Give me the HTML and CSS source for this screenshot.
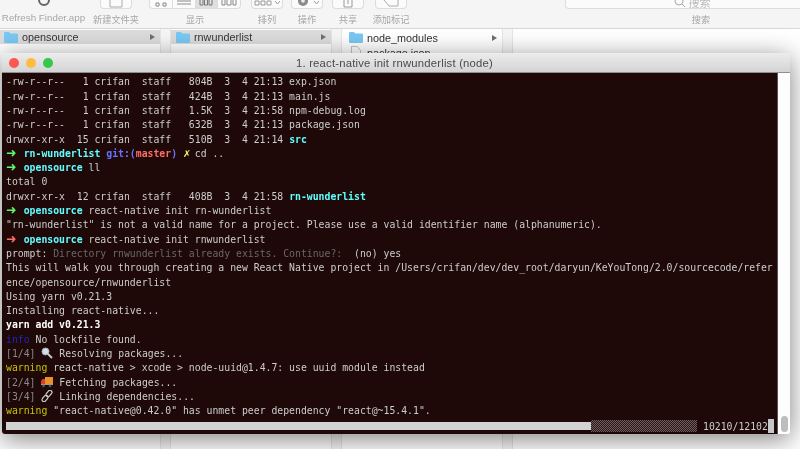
FILE: index.html
```html
<!DOCTYPE html>
<html lang="zh">
<head>
<meta charset="utf-8">
<title>Terminal over Finder</title>
<link rel="stylesheet" href="styles.css">
</head>
<body>
<div class="finder">
  <header class="toolbar">
    <div class="tool tool-app"><svg class="app-icon" width="20" height="10" viewBox="0 0 20 10"><circle cx="10" cy="0" r="5" fill="none" stroke="#666" stroke-width="2"/></svg><span>Refresh Finder.app</span></div>
    <div class="tool tool-new"><div class="btn btn-new"><svg width="14" height="9" viewBox="0 0 14 9"><path d="M1 0V7H13V0" fill="none" stroke="#aaa"/></svg></div><span>新建文件夹</span></div>
    <div class="tool tool-view"><div class="seg"><i class="cell"><svg width="12" height="8" viewBox="0 0 12 8"><path d="M1 3h3v3H1zM8 3h3v3H8z" fill="none" stroke="#888"/></svg></i><i class="cell"><svg width="14" height="8" viewBox="0 0 14 8"><path d="M0 1h14M0 4h14" stroke="#888"/></svg></i><i class="cell cell-on"><svg width="14" height="8" viewBox="0 0 14 8"><path d="M1 0v5h3V0M5.500 0v5h3V0M10 0v5h3V0" fill="none" stroke="#777"/></svg></i><i class="cell"><svg width="16" height="8" viewBox="0 0 16 8"><path d="M1 0v5h3V0M6 0v5h4V0M12 0v5h3V0" fill="none" stroke="#888"/></svg></i></div><span>显示</span></div>
    <div class="tool tool-sort"><div class="btn btn-sort"><svg width="26" height="8" viewBox="0 0 26 8"><path d="M1 1h4v4H1zM7 1h4v4H7zM13 1h4v4h-4z" fill="none" stroke="#999"/><path d="M21 1l2.500 3L26 1" fill="none" stroke="#999"/></svg></div><span>排列</span></div>
    <div class="tool tool-act"><div class="btn btn-act"><svg width="26" height="9" viewBox="0 0 26 9"><circle cx="9" cy="1" r="5" fill="#8a8a8a"/><circle cx="9" cy="1" r="1.800" fill="#eee"/><path d="M20 1l2.500 3L25 1" fill="none" stroke="#999"/></svg></div><span>操作</span></div>
    <div class="tool tool-share"><div class="btn btn-share"><svg width="14" height="9" viewBox="0 0 14 9"><path d="M3 0V7H11V0M7 0V4" fill="none" stroke="#999"/></svg></div><span>共享</span></div>
    <div class="tool tool-tag"><div class="btn btn-tag"><svg width="20" height="9" viewBox="0 0 20 9"><path d="M3 0L8 6H17V0" fill="none" stroke="#aaa"/></svg></div><span>添加标记</span></div>
    <div class="tool tool-search"><div class="btn btn-search"><svg width="12" height="9" viewBox="0 0 12 9"><circle cx="5" cy="1" r="4" fill="none" stroke="#aaa"/><path d="M8 4l3 3" stroke="#aaa"/></svg><em>搜索</em></div><span>搜索</span></div>
  </header>
  <main class="columns">
    <section class="col">
      <div class="row row-on"><svg class="folder" width="14" height="11" viewBox="0 0 17 12" preserveAspectRatio="none"><path d="M0 1.500Q0 0 1.500 0H6L7.500 1.500H15.500Q17 1.500 17 3V10.500Q17 12 15.500 12H1.500Q0 12 0 10.500Z" fill="#79c8f4"/></svg><span>opensource</span><b class="arrow"></b></div>
    </section>
    <div class="sep"></div>
    <section class="col">
      <div class="row row-on"><svg class="folder" width="14" height="11" viewBox="0 0 17 12" preserveAspectRatio="none"><path d="M0 1.500Q0 0 1.500 0H6L7.500 1.500H15.500Q17 1.500 17 3V10.500Q17 12 15.500 12H1.500Q0 12 0 10.500Z" fill="#79c8f4"/></svg><span>rnwunderlist</span><b class="arrow"></b></div>
    </section>
    <div class="sep"></div>
    <section class="col col-third">
      <div class="row"><svg class="folder" width="14" height="11" viewBox="0 0 17 12" preserveAspectRatio="none"><path d="M0 1.500Q0 0 1.500 0H6L7.500 1.500H15.500Q17 1.500 17 3V10.500Q17 12 15.500 12H1.500Q0 12 0 10.500Z" fill="#79c8f4"/></svg><span>node_modules</span><b class="arrow"></b></div>
      <div class="row"><svg class="folder" width="14" height="13" viewBox="0 0 17 13" preserveAspectRatio="none"><path d="M3 .5H10L14 4.500V13H3Z" fill="#fff" stroke="#bbb"/></svg><span>package.json</span></div>
    </section>
    <div class="sep"></div>
    <section class="col col-last"></section>
  </main>
</div>

<div class="term">
  <div class="titlebar">
    <div class="lights"><i class="light red"></i><i class="light yellow"></i><i class="light green"></i></div>
    <div class="title">1. react-native init rnwunderlist (node)</div>
  </div>
  <div class="term-main">
    <div class="screen">
<div class="ln">-rw-r--r--   1 crifan  staff   804B  3  4 21:13 exp.json</div>
<div class="ln">-rw-r--r--   1 crifan  staff   424B  3  4 21:13 main.js</div>
<div class="ln">-rw-r--r--   1 crifan  staff   1.5K  3  4 21:58 npm-debug.log</div>
<div class="ln">-rw-r--r--   1 crifan  staff   632B  3  4 21:13 package.json</div>
<div class="ln">drwxr-xr-x  15 crifan  staff   510B  3  4 21:14 <b class="cy">src</b></div>
<div class="ln"><b class="gr ar">➜</b>  <b class="cy">rn-wunderlist</b> <b class="bl">git:(</b><b class="rd">master</b><b class="bl">)</b> <b class="ye ar x">✗</b> cd ..</div>
<div class="ln"><b class="gr ar">➜</b>  <b class="cy">opensource</b> ll</div>
<div class="ln">total 0</div>
<div class="ln">drwxr-xr-x  12 crifan  staff   408B  3  4 21:58 <b class="cy">rn-wunderlist</b></div>
<div class="ln"><b class="gr ar">➜</b>  <b class="cy">opensource</b> react-native init rn-wunderlist</div>
<div class="ln">"rn-wunderlist" is not a valid name for a project. Please use a valid identifier name (alphanumeric).</div>
<div class="ln"><b class="rd ar">➜</b>  <b class="cy">opensource</b> react-native init rnwunderlist</div>
<div class="ln">prompt: <span class="dim">Directory rnwunderlist already exists. Continue?:</span>  (no) yes</div>
<div class="ln">This will walk you through creating a new React Native project in /Users/crifan/dev/dev_root/daryun/KeYouTong/2.0/sourcecode/refer</div>
<div class="ln">ence/opensource/rnwunderlist</div>
<div class="ln">Using yarn v0.21.3</div>
<div class="ln">Installing react-native...</div>
<div class="ln"><b class="wh">yarn add v0.21.3</b></div>
<div class="ln"><span class="inf">info</span> No lockfile found.</div>
<div class="ln"><span class="step">[1/4]</span> <svg class="emo" width="12" height="12" viewBox="0 0 12 12"><circle cx="4.500" cy="4.500" r="3.500" fill="#cfe0e8" stroke="#aab"/><path d="M7 7l4 4" stroke="#c8c8c8" stroke-width="2"/></svg> Resolving packages...</div>
<div class="ln"><span class="wrn">warning</span> react-native &gt; xcode &gt; node-uuid@1.4.7: use uuid module instead</div>
<div class="ln"><span class="step">[2/4]</span> <svg class="emo" width="12" height="12" viewBox="0 0 12 12"><path d="M4 1h8v7H4z" fill="#e8902c"/><path d="M0 5l1.500-2H4v5H0z" fill="#d8402c"/><path d="M0 8h12v1H0z" fill="#9a9a9a"/><circle cx="2.500" cy="10" r="1.300" fill="#555"/><circle cx="9" cy="10" r="1.300" fill="#555"/></svg> Fetching packages...</div>
<div class="ln"><span class="step">[3/4]</span> <svg class="emo" width="12" height="12" viewBox="0 0 12 12"><g fill="none" stroke="#cfcfcf" stroke-width="1.200"><rect x="6" y="0" width="4" height="7" rx="2" transform="rotate(40 8 3.500)"/><rect x="2" y="5" width="4" height="7" rx="2" transform="rotate(40 4 8.500)"/></g></svg> Linking dependencies...</div>
<div class="ln"><span class="wrn">warning</span> "react-native@0.42.0" has unmet peer dependency "react@~15.4.1".</div>
<div class="progress">
  <div class="bar-done"></div>
  <div class="bar-left"></div>
  <div class="count">10210/12102</div>
  <div class="cursor"></div>
</div>
    </div>
    <aside class="gutter"><div class="thumb"></div></aside>
  </div>
</div>
</body>
</html>
```

FILE: styles.css
```css
html, body {
  margin: 0;
  padding: 0;
  width: 800px;
  height: 449px;
  overflow: hidden;
  background: #fff;
}

body {
  position: relative;
  font-family: "Liberation Sans", "Noto Sans CJK SC", sans-serif;
  filter: blur(0.35px);
}

/* Finder behind */
.finder {
  height: 449px;
  display: flex;
  flex-direction: column;
}

.toolbar {
  height: 28px;
  display: flex;
  background: #f5f5f5;
  border-bottom: 1px solid #d8d8d8;
  box-sizing: content-box;
  flex: none;
  color: #a6a6a6;
  font-size: 9.200px;
}

.tool {
  position: relative;
  display: flex;
  flex-direction: column;
  align-items: center;
  flex: none;
}

.tool > span {
  position: absolute;
  top: 12px;
  white-space: nowrap;
}

.tool-app { width: 87px; font-size: 9.800px; }
.tool-new { width: 64px; margin-left: -3px; }
.tool-view { width: 92px; margin-left: 1px; }
.tool-sort { width: 32px; margin-left: 10px; }
.tool-act { width: 32px; margin-left: 8px; }
.tool-share { width: 32px; margin-left: 9px; }
.tool-tag { width: 32px; margin-left: 11px; }
.tool-search { width: 272px; margin-left: 158px; }

.app-icon { display: block; }

.btn, .seg {
  background: #fbfbfb;
  border: 1px solid #dcdcdc;
  border-top: 0;
  border-radius: 0 0 4px 4px;
  display: flex;
  align-items: flex-start;
  justify-content: center;
}

.btn { width: 100%; box-sizing: border-box; height: 9px; }
.btn-new { width: 32px; }
.btn-search { gap: 3px; color: #bbb; padding-right: 18px; }
.btn-search em { font-style: normal; font-size: 11px; line-height: 6px; }

.seg { width: 92px; box-sizing: border-box; height: 9px; }

.cell {
  flex: 1;
  height: 8px;
  display: flex;
  justify-content: center;
  border-right: 1px solid #dcdcdc;
}

.cell:last-child { border-right: 0; }
.cell-on { background: #dfdfdf; }

.columns {
  flex: 1;
  display: flex;
  background: #fff;
}

.col { width: 160px; flex: none; padding-top: 1px; }
.col-last { flex: 1; }
.col-third .row { padding-left: 7px; height: 15px; }

.sep {
  width: 11px;
  flex: none;
  background: #f6f6f6;
  border-left: 1px solid #e6e6e6;
  border-right: 1px solid #e6e6e6;
  box-sizing: border-box;
}

.row {
  height: 14px;
  display: flex;
  align-items: center;
  font-size: 10.800px;
  color: #333;
  padding: 0 4px 0 5px;
  box-sizing: border-box;
}

.col:first-child .row { padding-left: 4px; }
.row-on { background: #dcdcdc; }
.row .folder { flex: none; margin-right: 4px; }
.row span { flex: 1; white-space: nowrap; }

.arrow {
  width: 0;
  height: 0;
  border-left: 5px solid #707070;
  border-top: 3.500px solid transparent;
  border-bottom: 3.500px solid transparent;
  margin-right: 1px;
}

/* Terminal window */
.term {
  position: absolute;
  left: 2px;
  top: 53px;
  width: 788px;
  height: 381px;
  border-radius: 5px 5px 3px 3px;
  box-shadow: 0 5px 26px rgba(0, 0, 0, 0.5);
  display: flex;
  flex-direction: column;
  overflow: hidden;
}

.titlebar {
  height: 20px;
  flex: none;
  position: relative;
  display: flex;
  align-items: center;
  justify-content: center;
  background: linear-gradient(#ececec, #d4d4d4);
  border-bottom: 1px solid #8f8f8f;
  box-sizing: border-box;
}

.lights {
  position: absolute;
  left: 7px;
  top: 5px;
  display: flex;
  gap: 7px;
}

.light {
  width: 10px;
  height: 10px;
  border-radius: 50%;
  display: block;
}

.red { background: #fc5753; }
.yellow { background: #fdbc40; }
.green { background: #34c84a; }

.title {
  font-size: 11.300px;
  color: #4a4a4a;
  font-family: "Liberation Sans", sans-serif;
  padding-right: 3px;
  letter-spacing: 0.2px;
}

.term-main {
  flex: 1;
  display: flex;
  min-height: 0;
}

.screen {
  width: 776px;
  flex: none;
  background: #1e0808;
  box-sizing: border-box;
  padding: 2.400px 0 0 4px;
  color: #cdcdcd;
  font-family: "DejaVu Sans Mono", monospace;
  font-size: 9.800px;
  border-right: 1px solid #555;
}

.ln {
  height: 14.300px;
  line-height: 14.300px;
  white-space: pre;
}

.ln b { font-weight: 700; }
.cy { color: #60fdff; }
.gr { color: #5ff967; }
.rd { color: #ff6e67; }
.bl { color: #6871ff; }
.ye { color: #fffc67; }
.wh { color: #feffff; }
.dim { color: #686868; }
.step { color: #8a8a8a; }
.inf { color: #2225c4; }
.wrn { color: #c7c400; }

.ln .ar {
  display: inline-block;
  width: 5.900px;
  font-family: "DejaVu Sans", sans-serif;
  font-size: 12.500px;
  line-height: 0;
  overflow: visible;
}

.ln .x { font-size: 9.500px; }

.emo { vertical-align: -2px; width: 12px; height: 12px; }

.progress {
  display: flex;
  align-items: center;
  height: 14px;
  margin-top: 0.600px;
}

.bar-done {
  width: 585px;
  height: 8px;
  background: #d2d2d2;
  flex: none;
}

.bar-left {
  width: 106px;
  height: 12px;
  flex: none;
  background: repeating-conic-gradient(#6e5c5c 0 25%, #2c1818 0 50%) 0 0 / 2px 2px;
}

.count {
  margin-left: 6px;
  white-space: pre;
}

.cursor {
  width: 6px;
  height: 14px;
  background: #c7c7c7;
  flex: none;
}

.gutter {
  flex: 1;
  background: #fdfdfd;
  display: flex;
  align-items: flex-end;
  justify-content: center;
  padding-bottom: 2px;
}

.thumb {
  width: 7px;
  height: 16px;
  background: #bdbdbd;
  border-radius: 4px;
}
```
